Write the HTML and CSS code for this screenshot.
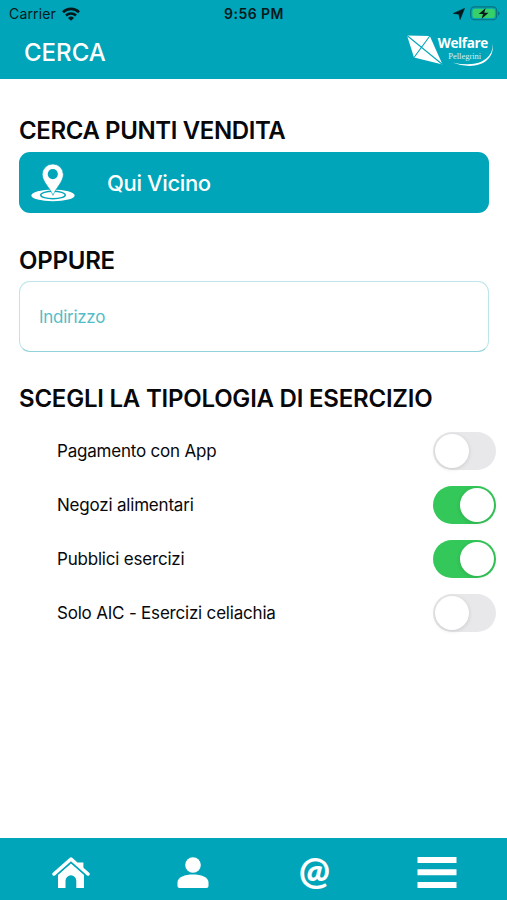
FILE: index.html
```
<!DOCTYPE html>
<html lang="it">
<head>
<meta charset="utf-8">
<title>Cerca</title>
<link rel="stylesheet" href="styles.css">
</head>
<body>
<div class="app">
  <header class="header">
    <div class="status">
      <div class="carrier"><span class="carrier-name">Carrier</span>
        <svg class="wifi" viewBox="0 0 18 14"><g fill="none" stroke="#05191c" stroke-width="2.6"><path d="M1 5.200a11.400 11.400 0 0 1 16 0"/><path d="M4 8.500a7.200 7.200 0 0 1 10 0"/></g><path d="M9 13.800 6 10.900a4.300 4.300 0 0 1 6 0z" fill="#05191c"/></svg>
      </div>
      <span class="time">9:56 PM</span>
      <div class="power">
        <svg class="location" viewBox="0 0 12 12"><path d="M11.500.4 7 11.600 5.900 6.200.3 5.400z" fill="#05191c" stroke="#05191c" stroke-width=".6"/></svg>
        <svg class="battery" viewBox="0 0 30 15"><rect x=".7" y=".9" width="26" height="12.8" rx="3.8" fill="none" stroke="#08717d" stroke-width="1.1"/><rect x="2.5" y="2.7" width="22.4" height="9.2" rx="2.2" fill="#37cf67"/><path d="M28 5.200q1.600.4 1.600 2.100T28 9.400z" fill="#08717d"/><path d="m15.700 2-7 6h4.400l-1.600 5 7-6.200h-4.300z" fill="#05191c"/></svg>
      </div>
    </div>
    <div class="titlebar">
      <h1 class="title">CERCA</h1>
      <svg class="logo" viewBox="0 0 88 36">
        <path d="M0 1.500 22.800 2 35.500 30.500 7 23.500z" fill="#fff"/>
        <path d="M0 1.500 35.500 30.500M22.800 2 7 23.500" stroke="#00a5b9" stroke-width="1.1"/>
        <path d="M85.300 9.500C88 20 80 31 65 31.800q-10 .6-19.500-3.400 10 2.400 19 1.700C78 29 87 20 85.300 9.500z" fill="#fff"/>
        <text class="brand" x="30.7" y="13.9" textLength="50.5">Welfare</text>
        <text class="subbrand" x="41.2" y="25" textLength="33" lengthAdjust="spacingAndGlyphs">Pellegrini</text>
      </svg>
    </div>
  </header>
  <main class="content">
    <h2 class="heading heading-search">CERCA PUNTI VENDITA</h2>
    <button class="nearby">
      <svg class="pin" viewBox="0 0 44 38"><ellipse cx="22" cy="31.4" rx="21.6" ry="5.8" fill="#fff"/><ellipse cx="22" cy="31" rx="12.3" ry="3.8" fill="#fff" stroke="#00a5b9" stroke-width="1.4"/><path d="M22 31.300C19 24 11.200 17.500 11.200 10.600a10.600 10.600 0 0 1 21.200 0C32.400 17.500 25 24 22 31.300z" fill="#fff" stroke="#00a5b9" stroke-width=".7"/><circle cx="21.8" cy="10.1" r="5.1" fill="#00a5b9"/></svg>
      <span class="nearby-label">Qui Vicino</span>
    </button>
    <h2 class="heading heading-or">OPPURE</h2>
    <div class="address"><span class="placeholder">Indirizzo</span></div>
    <h2 class="heading heading-type">SCEGLI LA TIPOLOGIA DI ESERCIZIO</h2>
    <ul class="options">
      <li class="option"><span>Pagamento con App</span><span class="toggle"></span></li>
      <li class="option"><span>Negozi alimentari</span><span class="toggle on"></span></li>
      <li class="option"><span>Pubblici esercizi</span><span class="toggle on"></span></li>
      <li class="option"><span>Solo AIC - Esercizi celiachia</span><span class="toggle"></span></li>
    </ul>
  </main>
  <nav class="tabs">
    <svg class="home" viewBox="0 0 38 32"><path d="M6 17.500 19 6l13 11.500V31h-7.700v-7.300a5.400 5.400 0 0 0-10.800 0V31H6z" fill="#fff"/><path d="M2 18.700 19 3.700l17 15" fill="none" stroke="#00a5b9" stroke-width="4.2"/><path d="M26 5.500h5.400v9L26 9z" fill="#fff"/><path d="M2 17 19 2l17 15" fill="none" stroke="#fff" stroke-width="3.5" stroke-linecap="round" stroke-linejoin="round"/></svg>
    <svg class="user" viewBox="0 0 32 32"><circle cx="16" cy="8" r="7.8" fill="#fff"/><path d="M.5 29V25.500C.5 20 8 17.500 16 17.500s15.500 2.500 15.500 8V29q0 2-2 2h-27q-2 0-2-2z" fill="#fff"/></svg>
    <span class="at">@</span>
    <svg class="menu" viewBox="0 0 40 32"><path d="M.5 0h39v6H.5zM.5 12.300h39v6H.5zM.5 25h39v6H.5z" fill="#fff"/></svg>
  </nav>
</div>
</body>
</html>
```
FILE: styles.css
```
* { box-sizing: border-box; }
body { margin: 0; font-family: Inter, "Liberation Sans", sans-serif; background: #fff; color: #08080a; }
.app { height: 900px; display: flex; flex-direction: column; overflow: hidden; }
.header { height: 79px; background: #00a5b9; color: #fff; flex: none; }
.status { height: 27px; display: grid; grid-template-columns: 1fr auto 1fr; align-items: center; padding: 0 7px 0 8px; color: #05191c; font-size: 14px; line-height: 18px; }
.carrier { display: flex; align-items: center; gap: 6px; padding-left: 1px; }
.carrier-name { letter-spacing: .15px; }
.wifi { width: 18px; height: 14px; }
.time { font-weight: 600; letter-spacing: .45px; }
.power { display: flex; justify-content: flex-end; align-items: center; gap: 5px; }
.location { width: 12px; height: 12px; }
.battery { width: 30px; height: 15px; }
.titlebar { height: 52px; display: flex; justify-content: space-between; padding: 7px 12px 0 24px; }
.title { margin: 0; font-size: 24px; line-height: 38px; font-weight: 500; letter-spacing: 0; }
.logo { width: 88px; height: 36px; }
.brand { font: 700 13.500px "Open Sans", sans-serif; fill: #fff; }
.subbrand { font: 8.500px "Liberation Serif", serif; fill: #d4f3f6; }
.content { flex: 1; padding: 37px 11px 0 19px; }
.heading { margin: 0; font-size: 24px; line-height: 30px; font-weight: 600; white-space: nowrap; letter-spacing: -.22px; }
.heading-search { letter-spacing: -.39px; }
.nearby { display: flex; align-items: center; width: 470px; height: 61px; margin: 6px 0 0; padding: 0 0 0 12px; border: 0; border-radius: 11px; background: #00a5b9; color: #fff; font: 500 22px/30px Inter, sans-serif; letter-spacing: -.38px; }
.pin { width: 44px; height: 38px; margin-right: 32px; }
.heading-or { margin-top: 33px; }
.address { width: 470px; height: 71px; margin-top: 5px; padding-left: 19px; display: flex; align-items: center; border: 1px solid #bde6ea; border-bottom-color: #91d3da; border-radius: 11px; color: #51bdc8; font-size: 17px; letter-spacing: -.28px; }
.heading-type { margin-top: 32px; }
.options { list-style: none; margin: 10.400px 0 0; padding: 0 0 0 38px; }
.option { display: flex; justify-content: space-between; align-items: center; height: 53.800px; font-size: 17px; letter-spacing: -.2px; }
.toggle { width: 63px; height: 38px; border-radius: 19px; padding: 2px; background: #e8e8ea; display: flex; }
.toggle::before { content: ""; width: 34px; height: 34px; border-radius: 50%; background: #fff; box-shadow: 0 1px 4px #0002; }
.toggle.on { background: #34c759; justify-content: flex-end; }
.tabs { height: 62px; flex: none; background: #00a5b9; display: grid; grid-template-columns: repeat(4, 122px); justify-content: center; justify-items: center; align-items: center; padding-top: 7px; }
.home { width: 38px; height: 32px; }
.user { width: 32px; height: 32px; }
.menu { width: 40px; height: 32px; }
.at { color: #fff; font: 900 37px/32px Lato, sans-serif; padding-bottom: 5px; }
```
